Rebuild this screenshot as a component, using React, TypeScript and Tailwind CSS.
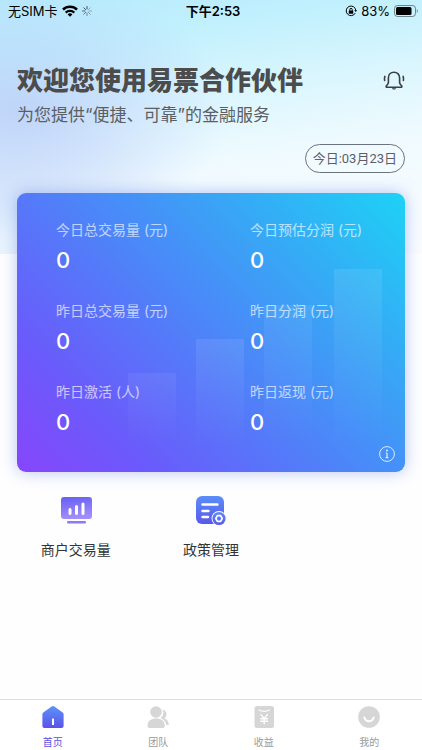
import { useState } from "react";

const stats = [
  { label: "今日总交易量", unit: "(元)", value: 0 },
  { label: "今日预估分润", unit: "(元)", value: 0 },
  { label: "昨日总交易量", unit: "(元)", value: 0 },
  { label: "昨日分润", unit: "(元)", value: 0 },
  { label: "昨日激活", unit: "(人)", value: 0 },
  { label: "昨日返现", unit: "(元)", value: 0 },
];

function StatusBar() {
  return (
    <div className="grid grid-cols-3 items-center h-[22px] pl-2 pr-1 text-[13px] leading-5 text-black">
      <div className="flex items-center gap-1">
        <span>无SIM卡</span>
        <svg className="w-4 h-3" viewBox="0 0 16 12" fill="none" stroke="#000">
          <path d="M1 4.600a10 10 0 0 1 14 0" strokeWidth="2.600" />
          <path d="M3.700 7.600a6.200 6.200 0 0 1 8.600 0" strokeWidth="2.200" />
          <path d="M8 11.800 5.600 9.400a3.500 3.500 0 0 1 4.800 0Z" fill="#000" stroke="none" />
        </svg>
        <svg className="w-[10px] h-[10px]" viewBox="0 0 20 20" stroke="#334155" strokeWidth="2" strokeLinecap="round">
          <path d="M10 1v5" opacity=".9" />
          <path d="M16.400 3.600 12.800 7.200" opacity=".35" />
          <path d="M19 10h-5" opacity=".4" />
          <path d="m16.400 16.400-3.600-3.600" opacity=".5" />
          <path d="M10 19v-5" opacity=".6" />
          <path d="m3.600 16.400 3.600-3.600" opacity=".7" />
          <path d="M1 10h5" opacity=".8" />
          <path d="m3.600 3.600 3.600 3.600" opacity=".9" />
        </svg>
      </div>
      <div className="text-center font-semibold">下午2:53</div>
      <div className="flex items-center justify-end gap-1">
        <svg className="w-3 h-3" viewBox="0 0 24 24" fill="none" stroke="#000" strokeWidth="2">
          <path d="M20.500 16.200A9.600 9.600 0 1 1 21.600 11" />
          <path d="m18.400 10.400 3.200 3.600 2.400-4Z" fill="#000" stroke="none" />
          <rect x="7.500" y="11" width="9" height="6.500" rx="1" fill="#000" stroke="none" />
          <path d="M9.500 11.500V9.300a2.500 2.500 0 0 1 5 0v2.200" />
        </svg>
        <span>83%</span>
        <svg className="w-6 h-3" viewBox="0 0 24 12">
          <rect x=".5" y=".5" width="21" height="11" rx="3" fill="none" stroke="#000" opacity=".45" />
          <rect x="2" y="2" width="15.500" height="8" rx="1.500" />
          <path d="M22.800 4v4c1-.5 1.200-3.500 0-4Z" opacity=".5" />
        </svg>
      </div>
    </div>
  );
}

function BellIcon() {
  return (
    <svg className="w-[22px] h-[22px]" viewBox="0 0 22 22" fill="none" stroke="#3a4046" strokeWidth="1.600" strokeLinecap="round" strokeLinejoin="round">
      <path d="M11 2.200c-3.500 0-5.600 2.500-5.600 5.700v4.600c0 1.200-1 2.100-2 3.300-.6.800-.2 1.400.6 1.400h14c.8 0 1.200-.6.6-1.400-1-1.200-2-2.100-2-3.300V7.900c0-3.200-2.100-5.700-5.600-5.700Z" />
      <path d="M8.800 18.200c.6 1.800 3.800 1.800 4.400 0Z" fill="#3a4046" stroke="none" />
      <path d="M1.900 6.400c-.5 1.300-.6 2.600-.3 4M20.100 6.400c.5 1.300.6 2.600.3 4" />
    </svg>
  );
}

function CardBars() {
  return (
    <svg className="absolute inset-0 w-full h-full" viewBox="0 0 388 279" preserveAspectRatio="xMaxYMax slice" aria-hidden="true">
      <defs>
        <linearGradient id="bar" x1="0" y1="0" x2="0" y2="1">
          <stop offset="0" stopColor="#fff" stopOpacity=".09" />
          <stop offset="1" stopColor="#fff" stopOpacity="0" />
        </linearGradient>
      </defs>
      <rect x="111" y="180" width="48" height="72" fill="url(#bar)" opacity=".7" />
      <rect x="179" y="146" width="48" height="108" fill="url(#bar)" />
      <rect x="247" y="112" width="48" height="142" fill="url(#bar)" opacity=".8" />
      <rect x="317" y="76" width="48" height="178" fill="url(#bar)" />
    </svg>
  );
}

function TradeIcon() {
  return (
    <svg className="w-8 h-8" viewBox="0 0 32 32">
      <defs>
        <linearGradient id="trade" x1="0" y1="0" x2="0.2" y2="1">
          <stop offset="0" stopColor="#655ef0" />
          <stop offset="1" stopColor="#a18dff" />
        </linearGradient>
      </defs>
      <rect x="1" y="3" width="31" height="22" rx="3" fill="url(#trade)" />
      <rect x="7" y="27" width="19" height="2.400" rx="1.200" fill="#8c7bf8" />
      <path d="M10 19.500v-4M16.500 19.500v-7M23 19.500v-9.500" stroke="#fff" strokeWidth="3" strokeLinecap="round" />
    </svg>
  );
}

function PolicyIcon() {
  return (
    <svg className="w-8 h-8" viewBox="0 0 32 32">
      <defs>
        <linearGradient id="policy" x1="0" y1="0" x2="0" y2="1">
          <stop offset="0" stopColor="#5b8ef8" />
          <stop offset="1" stopColor="#5b57ec" />
        </linearGradient>
      </defs>
      <rect x="1" y="2" width="28" height="28" rx="6" fill="url(#policy)" />
      <path d="M7.500 10.500h15M7.500 17h6M7.500 23h5.500" stroke="#fff" strokeWidth="2.400" strokeLinecap="round" />
      <circle cx="24" cy="24.500" r="7.500" fill="#fff" />
      <circle cx="24" cy="24.500" r="6.600" fill="url(#policy)" />
      <path d="M22.400 21.700h3.200l1.600 2.800-1.600 2.800h-3.200l-1.600-2.800Z" fill="none" stroke="#fff" strokeWidth="1.700" strokeLinejoin="round" />
    </svg>
  );
}

function HomeIcon() {
  return (
    <svg className="w-[22px] h-[22px]" viewBox="0 0 22 22">
      <defs>
        <linearGradient id="home" x1="0" y1="0" x2="0" y2="1">
          <stop offset="0" stopColor="#5c93f8" />
          <stop offset="1" stopColor="#5b53e8" />
        </linearGradient>
      </defs>
      <path d="M9.600.6a2.400 2.400 0 0 1 2.800 0l8.300 5.800c.6.400.9 1 .9 1.700V20a2 2 0 0 1-2 2H2.400a2 2 0 0 1-2-2V8.100c0-.7.3-1.300.9-1.700Z" fill="url(#home)" />
      <rect x="10" y="12.500" width="2" height="6.500" rx=".5" fill="#fff" />
    </svg>
  );
}

function TeamIcon() {
  return (
    <svg className="w-[22px] h-[22px]" viewBox="0 0 22 22" fill="#d6d6d6">
      <circle cx="9" cy="6" r="5.800" />
      <path d="M.5 20c0-5 3.800-7.400 8.700-7.400s8.600 2.400 8.600 7.400c0 1.200-.8 1.900-1.900 1.900H2.400C1.300 21.900.5 21.200.5 20Z" />
      <path d="M15.500 3.600c2.600.6 4 2.500 4 4.600 0 1.700-.8 3-2.200 4 2.700 1 4.300 3.200 4.600 6.500l-2.500.5c-.5-3-2-5-5-6.600l-.5-1c2.700-1.900 3-4.800 1.600-8Z" />
    </svg>
  );
}

function IncomeIcon() {
  return (
    <svg className="w-[22px] h-[22px]" viewBox="0 0 22 22">
      <rect x="1.500" y="0" width="19.500" height="22" rx="2.500" fill="#d6d6d6" />
      <path d="M6 4c3 1.600 7.200 1.600 10.400 0" fill="none" stroke="#fff" strokeWidth="1.200" strokeLinecap="round" />
      <path d="m8 8.600 3.200 4 3.200-4M11.200 12.600v5.200M7.800 12.800h6.800M7.800 15.300h6.800" fill="none" stroke="#fff" strokeWidth="1.400" strokeLinecap="round" />
    </svg>
  );
}

function MineIcon() {
  return (
    <svg className="w-[22px] h-[22px]" viewBox="0 0 22 22">
      <circle cx="11" cy="11" r="10.800" fill="#d6d6d6" />
      <path d="M6.300 11.500c1.600 5 7.800 5 9.400 0" fill="none" stroke="#fff" strokeWidth="2" strokeLinecap="round" />
    </svg>
  );
}

const tabs = [
  { name: "首页", icon: <HomeIcon /> },
  { name: "团队", icon: <TeamIcon /> },
  { name: "收益", icon: <IncomeIcon /> },
  { name: "我的", icon: <MineIcon /> },
];

export default function App() {
  const [active, setActive] = useState("首页");

  return (
    <div className="min-h-screen flex flex-col bg-[#fefeff] font-['Inter','Noto_Sans_CJK_SC',sans-serif]">
      <div className="flex-1 bg-no-repeat bg-[length:100%_254px] bg-[radial-gradient(ellipse_210px_130px_at_20px_110px,#b6c8f8b8,#b6c8f800),radial-gradient(ellipse_180px_110px_at_0px_200px,#d4e6fba0,#d4e6fb00),linear-gradient(172deg,#b6ebfd_0%,#c4f1fd_20%,#dcf6fe_40%,#f1fbff_64%,#fafcff_100%)]">
        <StatusBar />

        {/* HEADER */}
        <header className="px-[17px] pt-[41px]">
          <div className="flex items-center justify-between">
            <h1 className="text-[26px] leading-9 font-black text-[#4c4c4c]">欢迎您使用易票合作伙伴</h1>
            <button type="button" aria-label="消息" className="cursor-pointer">
              <BellIcon />
            </button>
          </div>
          <p className="mt-1 text-[17px] leading-6 text-[#5a5f64]">为您提供“便捷、可靠”的金融服务</p>
          <div className="flex justify-end mt-[17px]">
            <span className="h-[29px] px-[7px] flex items-center rounded-full border border-[#6b7280] text-[13px] text-[#5c6066] font-['Roboto','Noto_Sans_CJK_SC',sans-serif]">
              今日:03月23日
            </span>
          </div>
        </header>

        {/* STATS */}
        <section className="relative mx-[17px] mt-5 pt-6 pb-7 rounded-[9px] shadow-[0_0_16px_#5b7be070] bg-[linear-gradient(45deg,#8746fb_0%,#6a5bfb_21%,#5579f9_42%,#4591f8_58%,#39a5f5_71%,#1dd2f5_100%)]">
          <CardBars />
          <dl className="relative grid grid-cols-2 gap-y-5">
            {stats.map((s) => (
              <div key={s.label} className="pl-[39px]">
                <dt className="flex gap-1 text-sm leading-[26px] text-white/65">
                  <span>{s.label}</span>
                  <span>{s.unit}</span>
                </dt>
                <dd className="text-[22px] leading-[35px] font-medium text-white">{s.value}</dd>
              </div>
            ))}
          </dl>
          <div className="h-1" />
          <button type="button" aria-label="说明" className="absolute right-[10px] bottom-[10px] cursor-pointer">
            <svg className="w-4 h-4" viewBox="0 0 16 16" fill="none" stroke="#d9ecff">
              <circle cx="8" cy="8" r="7.400" />
              <path d="M8 7v4.500M6.800 7H8M6.600 11.700h2.800" strokeWidth="1.200" />
              <circle cx="8" cy="4.600" r="1" fill="#d9ecff" stroke="none" />
            </svg>
          </button>
        </section>

        {/* ACTIONS */}
        <div className="grid grid-cols-3 px-2 pt-[22px]">
          <button type="button" className="flex flex-col items-center gap-3 text-sm leading-6 text-[#333333] cursor-pointer">
            <TradeIcon />
            商户交易量
          </button>
          <button type="button" className="flex flex-col items-center gap-3 text-sm leading-6 text-[#333333] cursor-pointer">
            <PolicyIcon />
            政策管理
          </button>
        </div>
      </div>

      {/* TABS */}
      <nav className="grid grid-cols-4 border-t border-[#dddddd] bg-white pt-1.5">
        {tabs.map((tab) => (
          <button
            key={tab.name}
            type="button"
            onClick={() => setActive(tab.name)}
            className={`flex flex-col items-center gap-1.5 text-[10px] leading-4 cursor-pointer ${
              active === tab.name ? "text-[#5a50e0]" : "text-[#9a9a9a]"
            }`}
          >
            {tab.icon}
            {tab.name}
          </button>
        ))}
      </nav>
    </div>
  );
}
